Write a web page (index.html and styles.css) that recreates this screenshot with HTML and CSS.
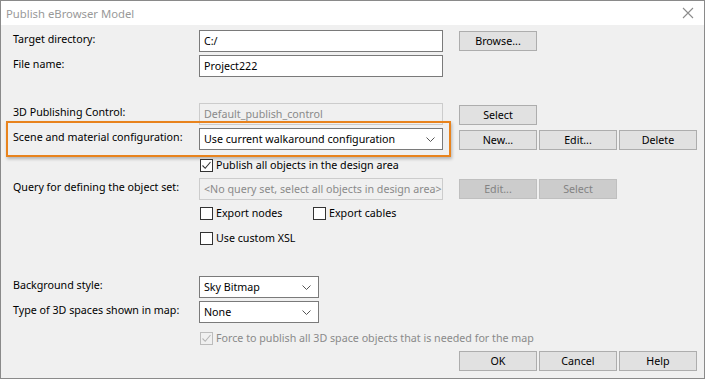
FILE: index.html
```html
<!DOCTYPE html>
<html>
<head>
<meta charset="utf-8">
<link rel="stylesheet" href="styles.css">
</head>
<body>
<div class="window">
  <div class="titlebar">
    <span class="title">Publish eBrowser Model</span>
    <svg class="close" width="12" height="12" viewBox="0 0 12 12"><path d="M1 1 L11 11 M11 1 L1 11" stroke="#8c8c8c" stroke-width="1.1" fill="none"/></svg>
  </div>
  <div class="content">
    <div class="row r1">
      <div class="label">Target directory:</div>
      <div class="input">C:/</div>
      <div class="btns"><div class="btn">Browse...</div></div>
    </div>
    <div class="row r2">
      <div class="label">File name:</div>
      <div class="input">Project222</div>
    </div>
    <div class="row r3">
      <div class="label">3D Publishing Control:</div>
      <div class="input disabled">Default_publish_control</div>
      <div class="btns"><div class="btn">Select</div></div>
    </div>
    <div class="row r4">
      <div class="highlight"></div>
      <div class="label">Scene and material configuration:</div>
      <div class="input select">Use current walkaround configuration<svg class="chev" width="9" height="5" viewBox="0 0 9 5"><path d="M0.5 0.5 L4.5 4.5 L8.5 0.5" stroke="#555" stroke-width="1" fill="none"/></svg></div>
      <div class="btns"><div class="btn">New...</div><div class="btn">Edit...</div><div class="btn">Delete</div></div>
    </div>
    <div class="row r5">
      <div class="label"></div>
      <label class="check"><span class="box checked"><svg width="11" height="11" viewBox="0 0 11 11"><path d="M1.5 5.5 L4.2 8.3 L9.5 2" stroke="#333" stroke-width="1.1" fill="none"/></svg></span>Publish all objects in the design area</label>
    </div>
    <div class="row r6">
      <div class="label">Query for defining the object set:</div>
      <div class="input disabled">&lt;No query set, select all objects in design area&gt;</div>
      <div class="btns"><div class="btn off">Edit...</div><div class="btn off">Select</div></div>
    </div>
    <div class="row r7">
      <div class="label"></div>
      <div class="checks">
        <label class="check w113"><span class="box"></span>Export nodes</label>
        <label class="check"><span class="box"></span>Export cables</label>
      </div>
    </div>
    <div class="row r8">
      <div class="label"></div>
      <label class="check"><span class="box"></span>Use custom XSL</label>
    </div>
    <div class="row r9">
      <div class="label">Background style:</div>
      <div class="input select small">Sky Bitmap<svg class="chev" width="9" height="5" viewBox="0 0 9 5"><path d="M0.5 0.5 L4.5 4.5 L8.5 0.5" stroke="#555" stroke-width="1" fill="none"/></svg></div>
    </div>
    <div class="row r10">
      <div class="label">Type of 3D spaces shown in map:</div>
      <div class="input select small">None<svg class="chev" width="9" height="5" viewBox="0 0 9 5"><path d="M0.5 0.5 L4.5 4.5 L8.5 0.5" stroke="#555" stroke-width="1" fill="none"/></svg></div>
    </div>
    <div class="row r11">
      <div class="label"></div>
      <label class="check dis"><span class="box checked"><svg width="11" height="11" viewBox="0 0 11 11"><path d="M1.5 5.5 L4.2 8.3 L9.5 2" stroke="#b5b5b5" stroke-width="1.1" fill="none"/></svg></span>Force to publish all 3D space objects that is needed for the map</label>
    </div>
    <div class="row r12">
      <div class="label"></div>
      <div class="spacer"></div>
      <div class="btns"><div class="btn">OK</div><div class="btn">Cancel</div><div class="btn">Help</div></div>
    </div>
  </div>
</div>
</body>
</html>
```

FILE: styles.css
```css
html, body {
  margin: 0;
  padding: 0;
  background: #ffffff;
}
body {
  font-family: "Noto Sans", "Open Sans", sans-serif;
  font-size: 10.7px;
  color: #000;
}
.window {
  width: 705px;
  height: 379px;
  box-sizing: border-box;
  border: 1px solid #8a8a8a;
  background: #f0f0f0;
  display: flex;
  flex-direction: column;
}
.titlebar {
  height: 24px;
  background: #ffffff;
  display: flex;
  align-items: center;
  justify-content: space-between;
  padding: 0 10px 0 5px;
  flex: none;
}
.title {
  color: #999999;
  font-size: 11.3px;
}
.close {
  display: block;
}
.content {
  padding: 0 0 0 12px;
  display: flex;
  flex-direction: column;
}
.row {
  display: flex;
  align-items: flex-start;
  position: relative;
}
.label {
  width: 186px;
  flex: none;
  line-height: 16px;
  padding-top: 1px;
}
.input {
  width: 244px;
  height: 22px;
  box-sizing: border-box;
  border: 1px solid #7a7a7a;
  background: #ffffff;
  padding: 0 4px;
  line-height: 20px;
  white-space: nowrap;
  overflow: hidden;
  flex: none;
  position: relative;
}
.input.disabled {
  border-color: #cccccc;
  background: #f0f0f0;
  color: #8a8a8a;
}
.input.select {
  display: flex;
  align-items: center;
  justify-content: space-between;
  padding-right: 7px;
}
.input.small {
  width: 120px;
}
.chev {
  display: block;
  flex: none;
}
.btns {
  display: flex;
  gap: 2px;
  margin-left: 16px;
}
.spacer {
  width: 244px;
}
.btn {
  width: 78px;
  height: 20px;
  box-sizing: border-box;
  border: 1px solid #adadad;
  background: #e1e1e1;
  text-align: center;
  line-height: 18px;
}
.btn.off {
  background: #cccccc;
  border-color: #bfbfbf;
  color: #838383;
}
.r1 { margin-top: 5px; }
.r1 .btns { margin-top: 1px; }
.r2 { margin-top: 3px; }
.r3 { margin-top: 26px; }
.r3 .btns { margin-top: 2px; }
.r4 { margin-top: 3px; }
.r4 .btns { margin-top: 2px; }
.r5 { margin-top: 7px; }
.r6 { margin-top: 5px; }
.r6 .btns { margin-top: 1px; }
.r7 { margin-top: 5px; }
.r8 { margin-top: 9px; }
.r9 { margin-top: 30px; }
.r10 { margin-top: 3px; }
.r11 { margin-top: 7px; }
.r12 { margin-top: 5px; }
.highlight {
  position: absolute;
  left: -7px;
  top: -7px;
  width: 445px;
  height: 36px;
  box-sizing: border-box;
  border: 2px solid #e8831d;
  box-shadow: 1px 2px 3px rgba(0,0,0,0.25);
  pointer-events: none;
}
.checks {
  display: flex;
}
.check {
  display: flex;
  align-items: center;
  height: 16px;
  line-height: 16px;
  white-space: nowrap;
}
.check.w113 {
  width: 113px;
}
.check.dis {
  color: #8a8a8a;
}
.box {
  width: 13px;
  height: 13px;
  box-sizing: border-box;
  border: 1px solid #333333;
  background: #ffffff;
  margin-left: 1px;
  margin-right: 3px;
  display: flex;
  align-items: center;
  justify-content: center;
  flex: none;
}
.check.dis .box {
  border-color: #bcbcbc;
  background: #f0f0f0;
}
.box svg {
  display: block;
}
```
